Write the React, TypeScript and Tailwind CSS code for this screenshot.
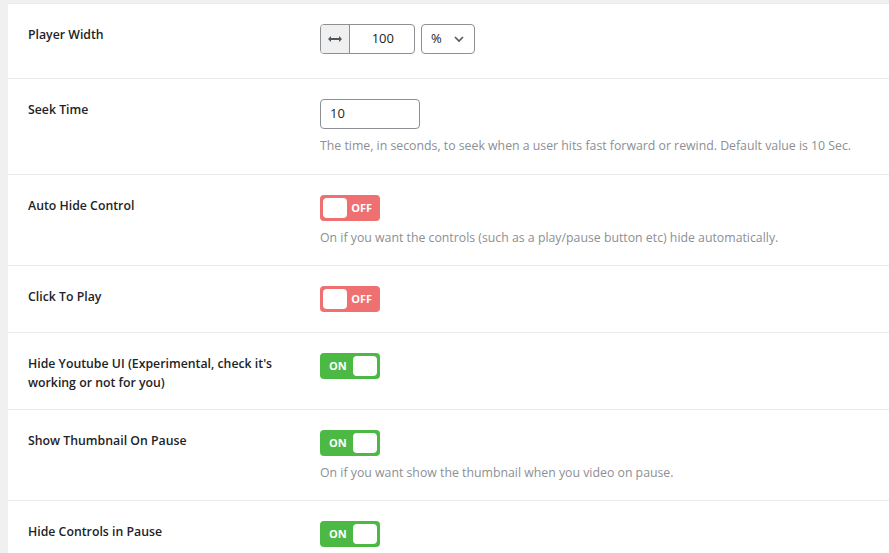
import React from "react";

const Toggle = ({ on }: { on: boolean }) =>
  on ? (
    <div className="w-[60px] h-[26px] rounded-[4px] bg-[#4cb944] flex items-center justify-between pl-[9px] pr-[3px]">
      <span className="text-white text-[11px] font-bold">ON</span>
      <span className="w-[24px] h-[20px] bg-white rounded-[4px]" />
    </div>
  ) : (
    <div className="w-[60px] h-[26px] rounded-[4px] bg-[#ef7070] flex items-center justify-between pl-[3px] pr-[8px]">
      <span className="w-[24px] h-[20px] bg-white rounded-[4px]" />
      <span className="text-white text-[11px] font-bold">OFF</span>
    </div>
  );

const Row = ({ label, children, desc, h }: { label: React.ReactNode; children: React.ReactNode; desc?: string; h: string }) => (
  <div className={`flex border-b border-[#ebebeb] ${h}`}>
    <div className="w-[312px] shrink-0 pl-[20px] pt-[21px] text-[12.3px] font-semibold text-[#1d2327] leading-[19px] pr-[30px]">{label}</div>
    <div className="pt-[20px]">
      {children}
      {desc && <div className="mt-[7px] text-[12.3px] text-[#8c8f94] leading-[20px]">{desc}</div>}
    </div>
  </div>
);

export default function App() {
  return (
    <div className="w-[889px] h-[553px] overflow-hidden bg-[#f0f0f1] flex" style={{ fontFamily: '"Open Sans", "Noto Sans", sans-serif' }}>
      <div className="w-[8px] shrink-0" />
      <div className="flex-1 bg-white mt-[3px] border-t border-[#ebebeb]">
        <Row label="Player Width" h="h-[75px]">
          <div className="flex gap-[6px]">
            <div className="flex h-[30px] border border-[#8c8f94] rounded-[4px] overflow-hidden">
              <div className="w-[29px] bg-[#f0f0f1] border-r border-[#8c8f94] flex items-center justify-center">
                <svg width="14" height="8" viewBox="0 0 14 8" fill="#50575e"><path d="M0 4l3-3v2h8V1l3 3-3 3V5H3v2z" /></svg>
              </div>
              <div className="w-[64px] flex items-center justify-end pr-[20px] text-[13px] text-[#1d2327]">100</div>
            </div>
            <div className="w-[54px] h-[30px] border border-[#8c8f94] rounded-[4px] flex items-center justify-between px-[9px] text-[13px] text-[#1d2327]">
              <span>%</span>
              <svg width="12" height="12" viewBox="0 0 12 12" fill="none" stroke="#50575e" strokeWidth="1.6"><path d="M2 4l4 4 4-4" /></svg>
            </div>
          </div>
        </Row>
        <Row label="Seek Time" h="h-[96px]" desc="The time, in seconds, to seek when a user hits fast forward or rewind. Default value is 10 Sec.">
          <div className="w-[100px] h-[30px] border border-[#8c8f94] rounded-[4px] flex items-center px-[9px] text-[13px] text-[#1d2327]">10</div>
        </Row>
        <Row label="Auto Hide Control" h="h-[91px]" desc="On if you want the controls (such as a play/pause button etc) hide automatically.">
          <Toggle on={false} />
        </Row>
        <Row label="Click To Play" h="h-[67px]"><Toggle on={false} /></Row>
        <Row label="Hide Youtube UI (Experimental, check it's working or not for you)" h="h-[77px]"><Toggle on /></Row>
        <Row label="Show Thumbnail On Pause" h="h-[91px]" desc="On if you want show the thumbnail when you video on pause.">
          <Toggle on />
        </Row>
        <Row label="Hide Controls in Pause" h="h-[91px]"><Toggle on /></Row>
      </div>
    </div>
  );
}
